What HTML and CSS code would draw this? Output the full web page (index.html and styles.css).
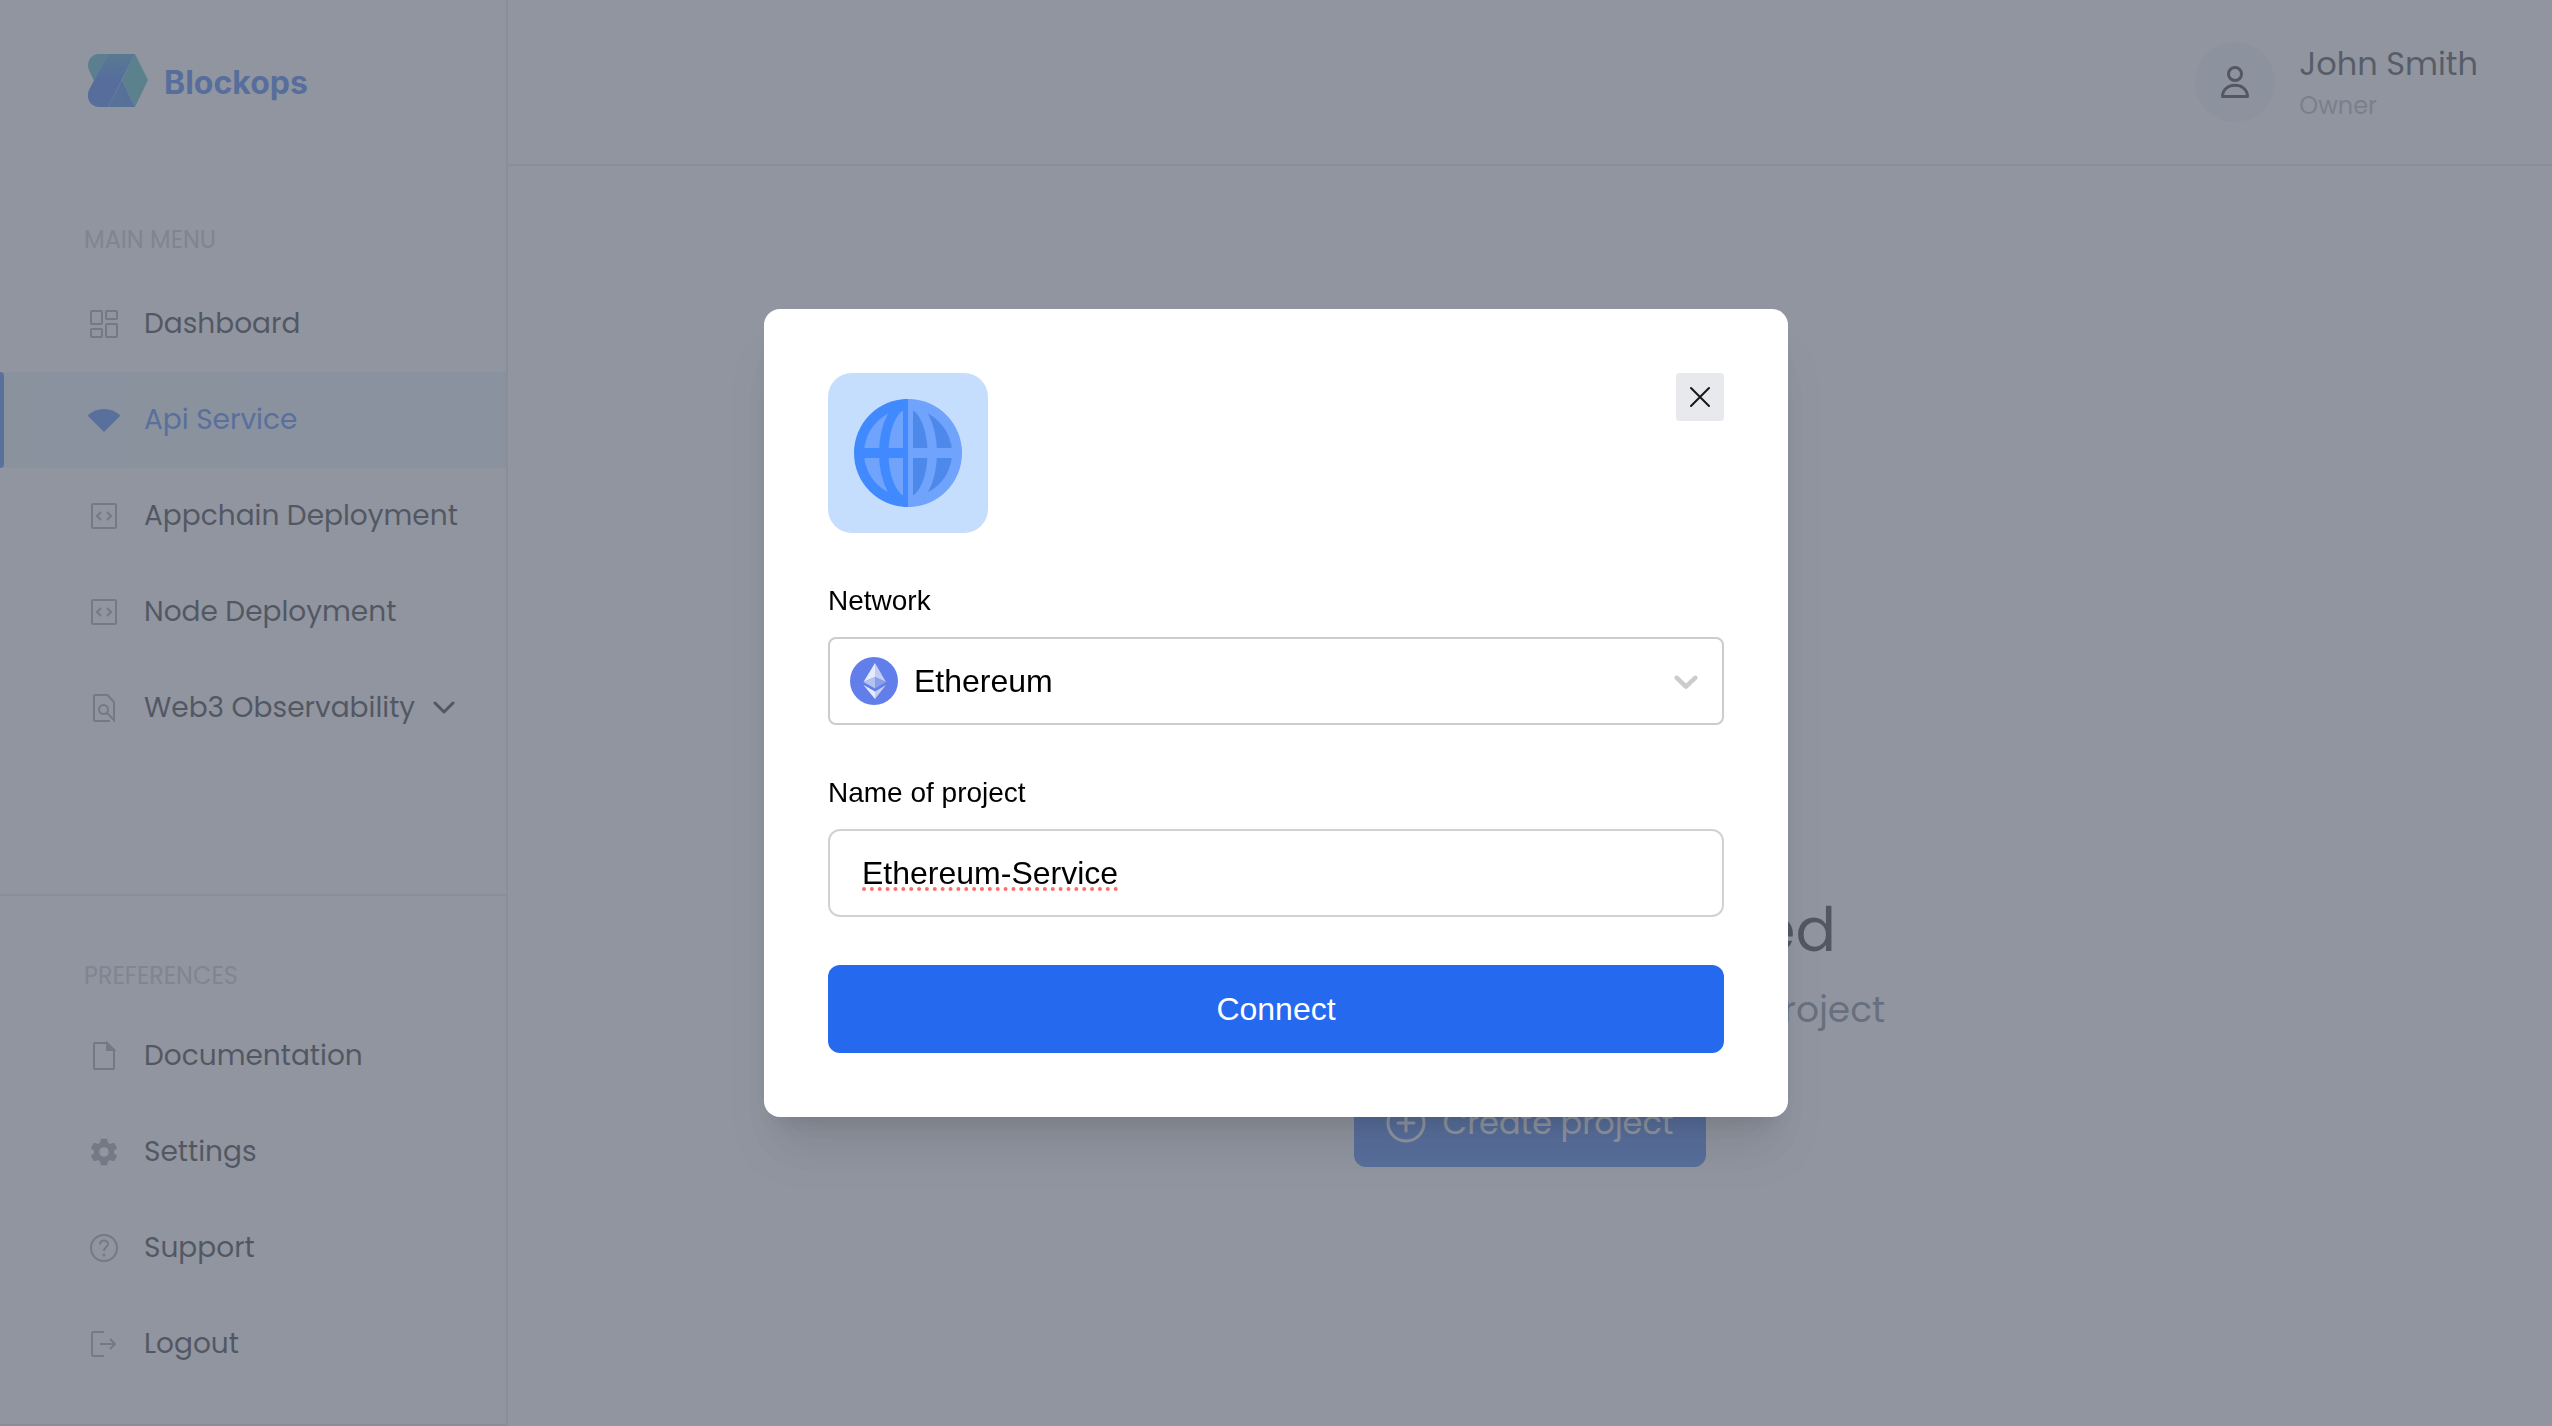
FILE: index.html
```
<!DOCTYPE html>
<html lang="en">
<head>
    <meta charset="UTF-8">
    <meta name="viewport" content="width=device-width, initial-scale=1.0">
    <title>Blockops - Api Service</title>
    <link rel="stylesheet" href="styles.css">
</head>
<body>
    <div class="app">
        <!-- Sidebar -->
        <aside class="sidebar">
            <a class="logo" href="#">
                <svg width="60" height="53" viewBox="0 0 60 53" aria-hidden="true">
                    <defs>
                        <linearGradient id="band" x1="0" y1="0" x2="0" y2="1">
                            <stop offset="0" stop-color="#2690c4"/>
                            <stop offset="0.45" stop-color="#1c66ee"/>
                        </linearGradient>
                        <linearGradient id="base" x1="0" y1="0" x2="1" y2="0">
                            <stop offset="0" stop-color="#217ad6"/>
                            <stop offset="1" stop-color="#1c66ee"/>
                        </linearGradient>
                    </defs>
                    <path d="M20 0H10C2 1-2 9 1 16L6 27Z" fill="#2fa6bc"/>
                    <path d="M20 0H47L20 53H10C1 52-2 43 1 36Z" fill="url(#band)"/>
                    <path d="M34 26L47 53H20Z" fill="url(#base)"/>
                    <path d="M47 0L60 26L47 53L34 26Z" fill="#2fb0b4"/>
                </svg>
                <span>Blockops</span>
            </a>

            <nav class="menu main-menu">
                <h2>MAIN MENU</h2>
                <a href="#">
                    <svg class="icon" viewBox="0 0 32 32"><rect x="3" y="3" width="11" height="13" rx="1"/><rect x="18" y="3" width="11" height="8" rx="1"/><rect x="3" y="21" width="11" height="8" rx="1"/><rect x="18" y="16" width="11" height="13" rx="1"/></svg>
                    Dashboard
                </a>
                <a class="active" href="#">
                    <svg class="icon icon-fill" viewBox="0 0 32 32"><path d="M0 11C9 3 23 3 32 11Q32 12 31 13L17 27Q16 28 15 27L1 13Q0 12 0 11Z"/></svg>
                    Api Service
                </a>
                <a href="#">
                    <svg class="icon" viewBox="0 0 32 32"><rect x="4" y="4" width="24" height="24" rx="1"/><path d="M13 12L9 16L13 20M19 12L23 16L19 20"/></svg>
                    Appchain Deployment
                </a>
                <a href="#">
                    <svg class="icon" viewBox="0 0 32 32"><rect x="4" y="4" width="24" height="24" rx="1"/><path d="M13 12L9 16L13 20M19 12L23 16L19 20"/></svg>
                    Node Deployment
                </a>
                <a href="#">
                    <svg class="icon" viewBox="0 0 32 32"><path d="M22 29H7Q6 29 6 28V4Q6 3 7 3H19.500L26 10V28L19 21"/><circle cx="15.500" cy="17.500" r="4.500"/></svg>
                    Web3 Observability
                    <svg class="chevron" viewBox="0 0 22 14"><path d="M2 2L11 11L20 2"/></svg>
                </a>
            </nav>

            <nav class="menu preferences">
                <h2>PREFERENCES</h2>
                <a href="#">
                    <svg class="icon" viewBox="0 0 32 32"><path d="M7 3H19L26 10V28Q26 29 25 29H7Q6 29 6 28V4Q6 3 7 3Z"/><path class="fold" d="M19 3V10H26Z"/></svg>
                    Documentation
                </a>
                <a href="#">
                    <svg class="icon icon-fill" viewBox="0.5 0.5 23 23"><path d="M19.14 12.94c.04-.3.06-.61.06-.94 0-.32-.02-.64-.07-.94l2.03-1.58c.18-.14.23-.41.12-.61l-1.92-3.32c-.12-.22-.37-.29-.59-.22l-2.39.96c-.5-.38-1.03-.7-1.620-.94l-.36-2.540c-.04-.24-.24-.41-.48-.41h-3.840c-.24 0-.43.17-.47.41l-.36 2.540c-.59.24-1.130.57-1.620.94l-2.390-.96c-.22-.08-.47 0-.59.22L2.740 8.870c-.12.21-.08.47.12.61l2.030 1.580c-.05.3-.09.63-.09.94s.02.64.07.94l-2.030 1.580c-.18.14-.23.41-.12.61l1.920 3.320c.12.22.37.29.59.22l2.390-.96c.5.38 1.030.7 1.620.94l.36 2.540c.05.24.24.41.48.41h3.840c.24 0 .44-.17.47-.41l.36-2.540c.59-.24 1.130-.56 1.620-.94l2.390.96c.22.08.47 0 .59-.22l1.920-3.320c.12-.22.07-.47-.12-.61l-2.010-1.580zM12 15.400c-1.900 0-3.400-1.500-3.400-3.400s1.500-3.400 3.400-3.400 3.400 1.500 3.400 3.400-1.500 3.400-3.400 3.400z"/></svg>
                    Settings
                </a>
                <a href="#">
                    <svg class="icon" viewBox="0 0 32 32"><circle cx="16" cy="16" r="13"/><path d="M12 12.500C12 7 20 7.500 20 12C20 15 16 15 16 19"/><circle class="fold" cx="16" cy="23" r="0.600"/></svg>
                    Support
                </a>
                <a href="#">
                    <svg class="icon" viewBox="0 0 32 32"><path d="M16 4H6Q4 4 4 6V26Q4 28 6 28H16M12 16H27M22 11L27 16L22 21"/></svg>
                    Logout
                </a>
            </nav>
        </aside>

        <!-- Page content behind the dialog -->
        <div class="page">
            <header class="topbar">
                <div class="avatar">
                    <svg width="32" height="36" viewBox="0 0 32 36" aria-hidden="true"><circle cx="16" cy="10" r="6.500"/><path d="M3.500 32.500C3.500 17.500 28.500 17.500 28.500 32.500Z"/></svg>
                </div>
                <div class="user">
                    <span class="user-name">John Smith</span>
                    <span class="user-role">Owner</span>
                </div>
            </header>
            <main class="empty">
                <h1>No projects selected</h1>
                <p>Click the button below to create project</p>
                <button class="create" type="button">
                    <svg width="40" height="40" viewBox="0 0 40 40" aria-hidden="true"><circle cx="20" cy="20" r="18"/><path d="M20 12V28M12 20H28"/></svg>
                    Create project
                </button>
            </main>
        </div>
    </div>

    <!-- Dialog -->
    <div class="overlay">
        <div class="modal" role="dialog" aria-modal="true" aria-label="Connect project">
            <div class="modal-top">
                <svg class="globe" viewBox="0 0 160 160" aria-hidden="true">
                    <defs>
                        <clipPath id="left"><rect x="0" y="0" width="80" height="160"/></clipPath>
                        <clipPath id="right"><rect x="80" y="0" width="80" height="160"/></clipPath>
                    </defs>
                    <g clip-path="url(#left)">
                        <circle cx="80" cy="80" r="54" fill="#4089ff"/>
                        <circle cx="80" cy="80" r="44" fill="#70a3fc"/>
                        <ellipse cx="80" cy="80" rx="29" ry="54" fill="#4089ff"/>
                        <ellipse cx="80" cy="80" rx="19.500" ry="44" fill="#70a3fc"/>
                        <path d="M30 75H75V30H85V130H75V85H30Z" fill="#4089ff"/>
                    </g>
                    <g clip-path="url(#right)">
                        <circle cx="80" cy="80" r="54" fill="#70a3fc"/>
                        <circle cx="80" cy="80" r="44" fill="#4d88eb"/>
                        <ellipse cx="80" cy="80" rx="29" ry="54" fill="#70a3fc"/>
                        <ellipse cx="80" cy="80" rx="19.500" ry="44" fill="#4d88eb"/>
                        <path d="M130 75H85V30H75V130H85V85H130Z" fill="#70a3fc"/>
                    </g>
                </svg>
                <button class="close" type="button" aria-label="Close">
                    <svg width="24" height="24" viewBox="0 0 24 24"><path d="M3 3L21 21M21 3L3 21"/></svg>
                </button>
            </div>
            <form>
                <div class="field">
                    <label for="network">Network</label>
                    <div class="select-box">
                        <select id="network">
                            <option>Ethereum</option>
                        </select>
                        <svg class="coin" viewBox="0 0 48 48" aria-hidden="true">
                            <circle cx="24" cy="24" r="24" fill="#627eea"/>
                            <path d="M25 6L13.500 25L25 20Z" fill="#e6ebfb"/>
                            <path d="M25 6L36 25L25 20Z" fill="#c3cdf4"/>
                            <path d="M13.500 25L25 20V31.500Z" fill="#b4c1f3"/>
                            <path d="M36 25L25 20V31.500Z" fill="#8a9feb"/>
                            <path d="M13.500 28L25 34.500V42Z" fill="#e6ebfb"/>
                            <path d="M36 28L25 34.500V42Z" fill="#c3cdf4"/>
                        </svg>
                        <svg class="arrow" viewBox="0 0 20 20" aria-hidden="true"><path d="M4.516 7.548c0.436-0.446 1.043-0.481 1.576 0l3.908 3.747 3.908-3.747c0.533-0.481 1.141-0.446 1.574 0 0.436 0.445 0.408 1.197 0 1.615-0.406 0.418-4.695 4.502-4.695 4.502-0.217 0.223-0.502 0.335-0.787 0.335s-0.570-0.112-0.789-0.335c0 0-4.287-4.084-4.695-4.502s-0.436-1.170 0-1.615z"/></svg>
                    </div>
                </div>
                <div class="field">
                    <label for="project">Name of project</label>
                    <input id="project" type="text" value="Ethereum-Service" spellcheck="false">
                </div>
                <button class="connect" type="submit">Connect</button>
            </form>
        </div>
    </div>
</body>
</html>
```
FILE: styles.css
```
* {
    box-sizing: border-box;
}

body {
    margin: 0;
    font-family: Poppins, Inter, sans-serif;
    color: #0a0a0a;
    background-color: #ffffff;
}

a {
    color: inherit;
    text-decoration: none;
}

h1,
h2,
p {
    margin: 0;
    font-weight: 400;
}

svg {
    flex-shrink: 0;
}

.app {
    display: flex;
    min-height: 100vh;
}

/* Sidebar */
.sidebar {
    width: 508px;
    flex-shrink: 0;
    border-right: 2px solid #e3e4e8;
    border-bottom: 2px solid #e3e4e8;
}

.logo {
    display: flex;
    align-items: center;
    gap: 16px;
    height: 160px;
    padding-left: 88px;
    font-family: Inter, sans-serif;
    font-size: 32px;
    font-weight: 700;
    color: #1c66ee;
}

.logo span {
    padding-top: 4px;
}

.menu h2 {
    padding-left: 84px;
    font-size: 24px;
    line-height: 36px;
    color: #bcbec4;
}

.main-menu {
    padding-top: 62px;
}

.main-menu h2 {
    margin-bottom: 18px;
}

.preferences {
    margin-top: 138px;
    padding: 62px 0 32px;
    border-top: 2px solid #e3e4e8;
}

.preferences h2 {
    margin-bottom: 14px;
}

.menu a {
    display: flex;
    align-items: center;
    gap: 24px;
    height: 96px;
    padding-left: 88px;
    font-size: 28px;
    white-space: nowrap;
}

.menu .active {
    padding-left: 0;
    color: #2469ee;
    background: linear-gradient(90deg, #e5f4f2, #e8f0fa 10%, #e8f0fa 24%, #e4f4f3 34%, #e4f4f3 40%, #e8f0fa 48%);
}

.menu .active::before {
    content: '';
    align-self: stretch;
    width: 4px;
    margin-right: 60px;
    border-radius: 0 4px 4px 0;
    background-color: #2469ee;
}

.icon {
    width: 32px;
    height: 32px;
    fill: none;
    stroke: #8c8e92;
    stroke-width: 2;
}

.icon-fill {
    fill: #8c8e92;
    stroke: none;
}

.active .icon {
    fill: #2469ee;
}

.icon .fold {
    fill: #8c8e92;
}

.chevron {
    width: 22px;
    height: 14px;
    margin-left: -6px;
    fill: none;
    stroke: #0a0a0a;
    stroke-width: 3;
    stroke-linecap: round;
    stroke-linejoin: round;
}

/* Top bar */
.page {
    flex: 1;
}

.topbar {
    display: flex;
    align-items: center;
    justify-content: flex-end;
    gap: 24px;
    height: 166px;
    padding-right: 74px;
    border-bottom: 2px solid #e3e4e8;
}

.avatar {
    display: flex;
    align-items: center;
    justify-content: center;
    width: 80px;
    height: 80px;
    border-radius: 50%;
    background-color: #eef6f6;
}

.avatar svg {
    fill: none;
    stroke: #0a0a0a;
    stroke-width: 3;
    stroke-linejoin: round;
}

.user {
    display: flex;
    flex-direction: column;
    padding-top: 4px;
}

.user-name {
    font-size: 32px;
    line-height: 44px;
    color: #1c1c1c;
}

.user-role {
    font-size: 24px;
    line-height: 40px;
    color: #a6a8b0;
}

/* Empty state */
.empty {
    display: flex;
    flex-direction: column;
    align-items: center;
    padding-top: 720px;
    text-align: center;
}

.empty h1 {
    font-size: 60px;
    line-height: 88px;
}

.empty p {
    margin-top: 8px;
    font-size: 36px;
    line-height: 56px;
    color: #606b7b;
}

.create {
    display: flex;
    align-items: center;
    gap: 16px;
    height: 88px;
    margin-top: 41px;
    padding: 0 32px;
    border: none;
    border-radius: 12px;
    font-family: inherit;
    font-size: 32px;
    color: #ffffff;
    background-color: #2469ee;
}

.create svg {
    fill: none;
    stroke: #ffffff;
    stroke-width: 3;
    stroke-linecap: round;
}

/* Dialog */
.overlay {
    position: fixed;
    inset: 0;
    display: flex;
    align-items: center;
    justify-content: center;
    background-color: rgba(107, 114, 128, 0.75);
}

.modal {
    width: 100%;
    max-width: 1024px;
    padding: 64px;
    border-radius: 16px;
    font-family: Helvetica, "Liberation Sans", Arial, sans-serif;
    color: #000000;
    background-color: #ffffff;
    box-shadow: 0 40px 50px -10px rgba(0, 0, 0, 0.1), 0 16px 20px -12px rgba(0, 0, 0, 0.1);
}

.modal-top {
    display: flex;
    align-items: flex-start;
    justify-content: space-between;
    margin-bottom: 48px;
}

.globe {
    width: 160px;
    height: 160px;
    border-radius: 24px;
    background-color: #c5defd;
}

.close {
    display: flex;
    align-items: center;
    justify-content: center;
    width: 48px;
    height: 48px;
    padding: 0;
    border: none;
    border-radius: 4px;
    background-color: #e8e9ed;
}

.close svg {
    fill: none;
    stroke: #18181b;
    stroke-width: 2;
    stroke-linecap: round;
}

.field {
    display: flex;
    flex-direction: column;
    gap: 16px;
    margin-bottom: 48px;
}

.field label {
    font-size: 28px;
    line-height: 40px;
}

/* coin and arrow share the grid cell of the select */
.select-box {
    display: grid;
    align-items: center;
}

.select-box > * {
    grid-area: 1 / 1;
}

.select-box select {
    appearance: none;
    height: 88px;
    padding: 0 64px 0 84px;
    border: 2px solid #cccccc;
    border-radius: 8px;
    font-family: inherit;
    font-size: 32px;
    color: #000000;
    background-color: #ffffff;
}

.coin {
    width: 48px;
    height: 48px;
    margin-left: 22px;
    pointer-events: none;
}

.arrow {
    justify-self: end;
    width: 40px;
    height: 40px;
    margin-right: 18px;
    fill: #cccccc;
    pointer-events: none;
}

.field input {
    height: 88px;
    padding: 0 32px;
    border: 2px solid #d1d1d6;
    border-radius: 12px;
    font-family: inherit;
    font-size: 32px;
    color: #000000;
    text-decoration: underline dotted #ff6e6e 4px;
    text-underline-offset: 4px;
    text-decoration-skip-ink: none;
}

.connect {
    width: 100%;
    height: 88px;
    border: none;
    border-radius: 12px;
    font-family: inherit;
    font-size: 32px;
    color: #ffffff;
    background-color: #2469ee;
}
```
